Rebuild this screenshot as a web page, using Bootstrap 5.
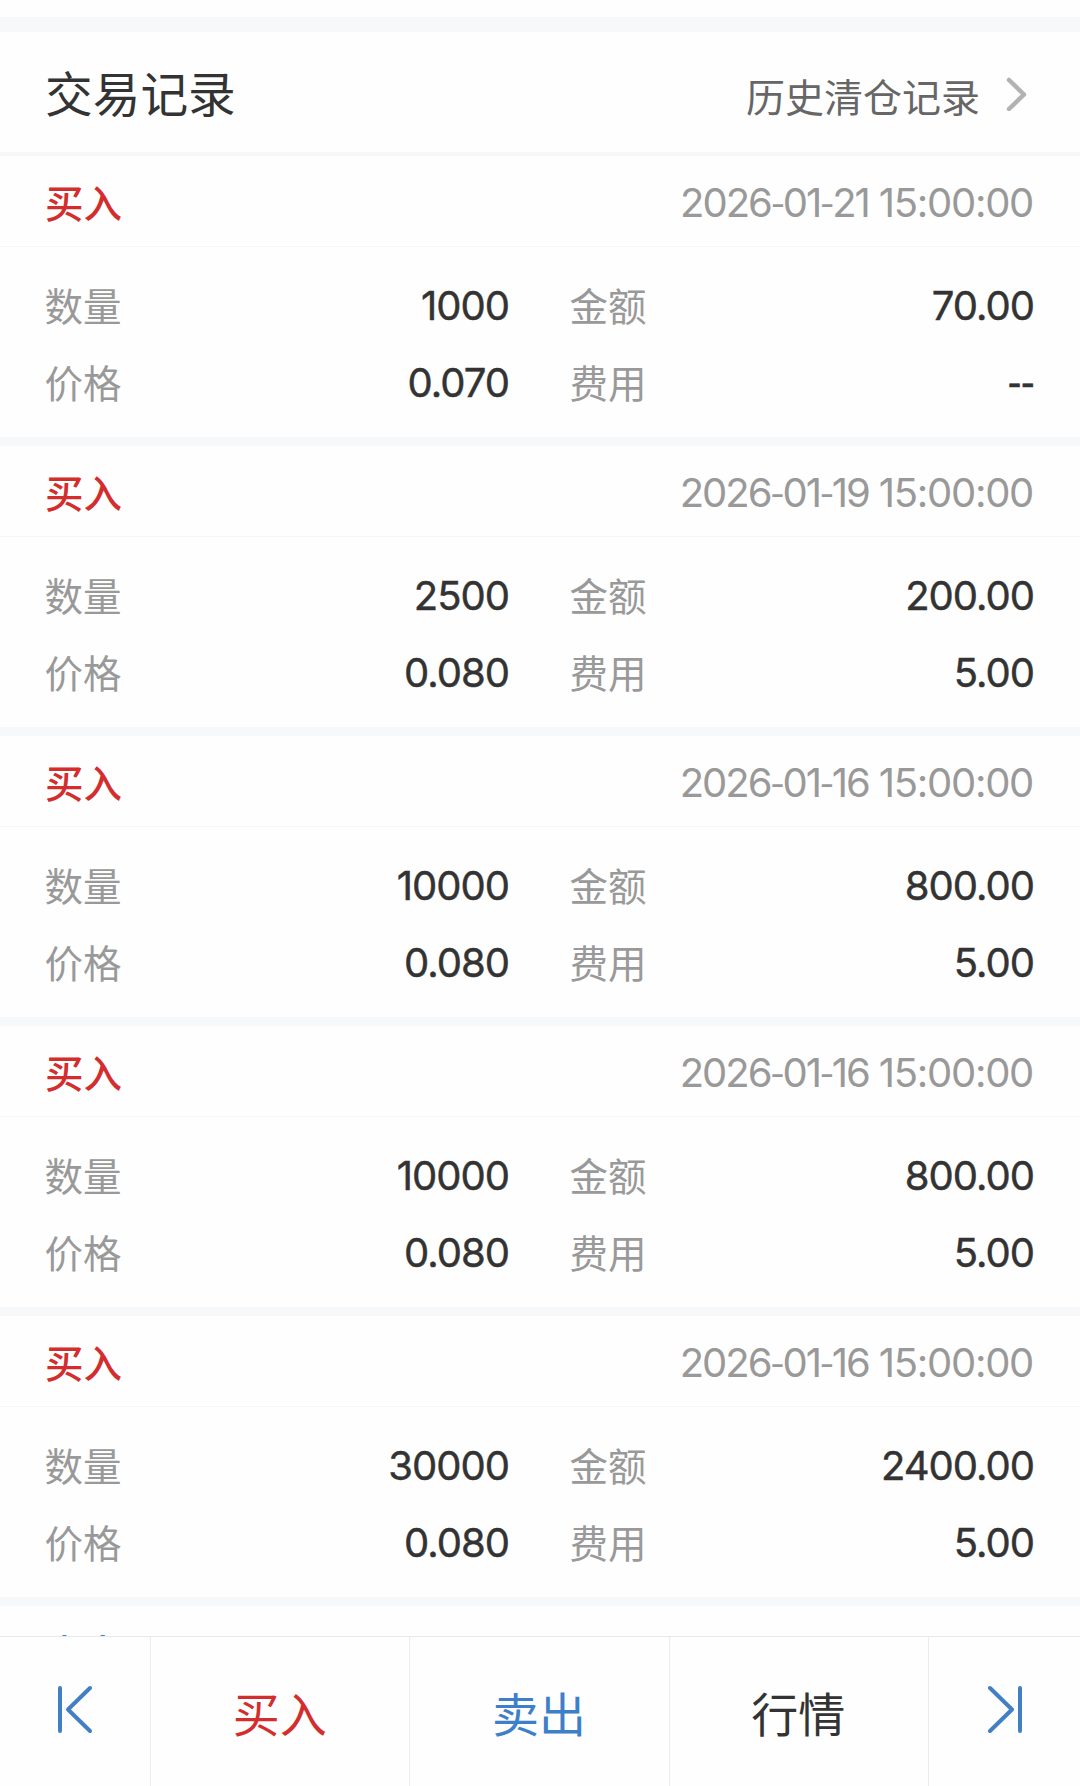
<!DOCTYPE html>
<html lang="zh-CN">
<head>
<meta charset="utf-8">
<meta name="viewport" content="width=device-width, initial-scale=1">
<title>交易记录</title>
<link href="https://cdn.jsdelivr.net/npm/bootstrap@5.3.0/dist/css/bootstrap.min.css" rel="stylesheet">
<style>
  body { font-family: "Noto Sans CJK SC", sans-serif; font-size: 38.5px; line-height: 1; color: #333; background: #fefefe; }
  .screen { height: 1786px; }
  .top-gap { height: 32px; border-bottom: 15px solid #f7f8fa; }
  .head-row { height: 124px; border-bottom: 4px solid #f7f7f8; padding: 0 52px 0 45px; }
  .head-title { font-size: 47.7px; }
  .head-link { color: #666; font-size: 39px; gap: 26px; padding-top: 6px; }
  .head-link svg { margin-top: -3px; }
  .rec { height: 290px; border-bottom: 9px solid #f7f8fa; }
  .rec-head { height: 91px; border-bottom: 1px solid #f6f6f6; padding: 0 47px 0 45px; }
  .side { font-weight: 500; }
  .buy { color: #d32d2d; }
  .sell { color: #3d7fc9; }
  .num { font-family: Inter, sans-serif; font-size: 40px; }
  .stamp { color: #999; letter-spacing: -1.3px; padding-top: 3px; }
  .stamp-day { letter-spacing: -2px; }
  .stamp-day i { font-style: normal; font-family: "Noto Sans CJK SC", sans-serif; line-height: 0; }
  .rec-body { padding: 20px 47px 0 45px; column-gap: 62px; }
  .pair { height: 77px; }
  .pair > span:first-child { color: #999; padding-bottom: 3px; margin-left: -.5px; }
  .pair .num { font-weight: 400; -webkit-text-stroke: .45px #333; letter-spacing: -1px; margin-right: -1px; }
  .pair .no-fee { font-family: "Noto Sans CJK SC", sans-serif; font-size: 38px; font-weight: 500; letter-spacing: -.5px; padding-bottom: 6px; }
  .pair-l { width: 463px; }
  .foot { height: 150px; background: #fefefe; border-top: 1px solid #e9e9e9; }
  .foot > a { font-size: 47px; border-right: 1px solid #ececec; padding-right: 1px; }
  .foot > a:last-child { border-right: 0; }
  .foot-end { width: 151px; flex: none; padding-bottom: 4px; }
</style>
<script src="https://cdn.jsdelivr.net/npm/bootstrap@5.3.0/dist/js/bootstrap.bundle.min.js"></script>
</head>
<body>
<div class="screen d-flex flex-column overflow-hidden">
  <main class="flex-fill overflow-hidden">
    <div class="top-gap"></div>
    <header class="head-row d-flex justify-content-between align-items-center">
      <span class="head-title">交易记录</span>
      <a class="head-link d-flex align-items-center text-decoration-none" href="#">历史清仓记录
        <svg width="22" height="34" viewBox="0 0 22 34" fill="none" stroke="#b2b2b2" stroke-width="4.500" stroke-linecap="round" stroke-linejoin="round"><path d="M3 3 18 17.500 3 32"/></svg>
      </a>
    </header>
    <div id="records"></div>
  </main>
  <nav class="foot d-flex flex-shrink-0">
    <a class="foot-end d-flex align-items-center justify-content-center" href="#">
      <svg width="38" height="50" viewBox="0 0 38 50" fill="none" stroke="#437fc4" stroke-width="4" stroke-linecap="round" stroke-linejoin="round"><path d="M4 3V46M34 3 12 24.500 34 46"/></svg>
    </a>
    <a class="flex-fill d-flex align-items-center justify-content-center text-decoration-none buy" href="#">买入</a>
    <a class="flex-fill d-flex align-items-center justify-content-center text-decoration-none sell" href="#">卖出</a>
    <a class="flex-fill d-flex align-items-center justify-content-center text-decoration-none text-reset" href="#">行情</a>
    <a class="foot-end d-flex align-items-center justify-content-center" href="#">
      <svg width="38" height="50" viewBox="0 0 38 50" fill="none" stroke="#437fc4" stroke-width="4" stroke-linecap="round" stroke-linejoin="round"><path d="M35 3V46M5 3 27 24.500 5 46"/></svg>
    </a>
  </nav>
</div>
<script>
  const records = [
    ['买入', '2026-01-21', '15:00:00', '1000', '70.00', '0.070', '--'],
    ['买入', '2026-01-19', '15:00:00', '2500', '200.00', '0.080', '5.00'],
    ['买入', '2026-01-16', '15:00:00', '10000', '800.00', '0.080', '5.00'],
    ['买入', '2026-01-16', '15:00:00', '10000', '800.00', '0.080', '5.00'],
    ['买入', '2026-01-16', '15:00:00', '30000', '2400.00', '0.080', '5.00'],
    ['卖出', '', '', '', '', '', '']
  ];
  const pair = (label, value, cls) =>
    `<div class="pair ${cls} d-flex justify-content-between align-items-center"><span>${label}</span><span class="num ${value === '--' ? 'no-fee' : ''}">${value}</span></div>`;
  document.getElementById('records').innerHTML = records.map(([side, day, time, qty, amount, price, fee]) => `
    <section class="rec">
      <div class="rec-head d-flex justify-content-between align-items-center">
        <span class="side ${side === '买入' ? 'buy' : 'sell'}">${side}</span><span class="num stamp"><span class="stamp-day">${day.replaceAll('-', '<i>-</i>')}</span> ${time}</span>
      </div>
      ${time ? `<div class="rec-body d-flex flex-wrap">
        ${pair('数量', qty, 'pair-l')}${pair('金额', amount, 'flex-fill')}
        ${pair('价格', price, 'pair-l')}${pair('费用', fee, 'flex-fill')}
      </div>` : ''}
    </section>`).join('');
</script>
</body>
</html>
